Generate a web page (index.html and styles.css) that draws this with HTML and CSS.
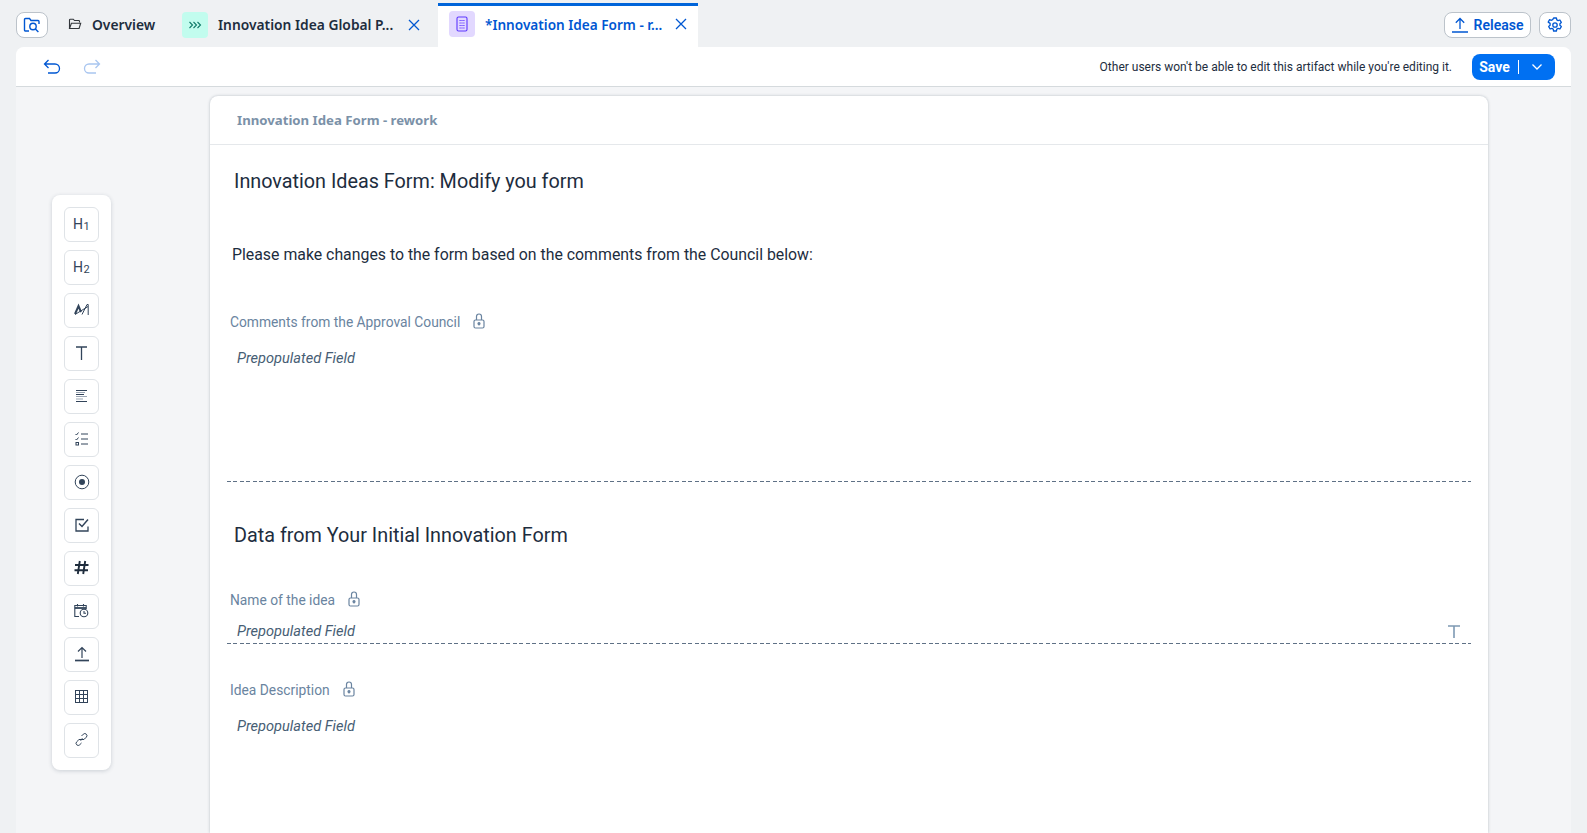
FILE: index.html
```html
<!DOCTYPE html>
<html lang="en">
<head>
    <meta charset="UTF-8">
    <meta name="viewport" content="width=device-width, initial-scale=1.0">
    <title>Innovation Idea Form - rework</title>
    <link rel="stylesheet" href="styles.css">
</head>
<body>
    <!-- Tab bar -->
    <header class="tabbar">
        <button class="ghost-btn search-btn" aria-label="Search">
            <svg width="18" height="18" viewBox="0 0 18 18" fill="none" stroke="#0057d2" stroke-width="1.4"><path d="M6 15H2.500a1 1 0 0 1-1-1V3.500a1 1 0 0 1 1-1h4l1.500 2h7a1 1 0 0 1 1 1V8"/><circle cx="10" cy="10.500" r="3.200"/><path d="M12.400 12.900l3 3"/></svg>
        </button>
        <div class="tab tab-overview">
            <svg width="14" height="14" viewBox="0 0 14 14" fill="none" stroke="#32363a" stroke-width="1.1"><path d="M1.500 11.500V3a.8.8 0 0 1 .8-.8h3l1.200 1.300h4.200a.8.8 0 0 1 .8.8v1.200"/><path d="M1.500 11.500h9.600l1.600-5.300H3.400z"/></svg>
            <span>Overview</span>
        </div>
        <div class="tab tab-process">
            <span class="chip chip-teal">
                <svg width="14" height="10" viewBox="0 0 14 10" fill="none" stroke="#0f7a6a" stroke-width="1.1"><path d="M1.500 2l3 3-3 3M5.500 2l3 3-3 3M9.500 2l3 3-3 3"/></svg>
            </span>
            <span class="tab-label">Innovation Idea Global P...</span>
            <svg class="tab-close" width="12" height="12" viewBox="0 0 12 12" stroke="#0057d2" stroke-width="1.3"><path d="M1 1l10 10M11 1L1 11"/></svg>
        </div>
        <div class="tab tab-active">
            <span class="chip chip-purple">
                <svg width="12" height="16" viewBox="0 0 12 16" fill="none" stroke="#5d36ff" stroke-width="1.1"><rect x="1" y="1" width="10" height="14" rx="1.500"/><path d="M3.500 4.500h5M3.500 7h5M3.500 9.500h5M3.500 12h5" stroke-dasharray="1.200 .7"/></svg>
            </span>
            <span class="tab-label">*Innovation Idea Form - r...</span>
            <svg class="tab-close" width="12" height="12" viewBox="0 0 12 12" stroke="#0057d2" stroke-width="1.3"><path d="M1 1l10 10M11 1L1 11"/></svg>
        </div>
        <div class="tabbar-actions">
            <button class="ghost-btn release-btn">
                <svg width="16" height="16" viewBox="0 0 16 16" fill="none" stroke="#0057d2" stroke-width="1.3"><path d="M8 12V1.500M3.800 5.700L8 1.500l4.200 4.200M0 15h16"/></svg>
                Release
            </button>
            <button class="ghost-btn gear-btn" aria-label="Settings">
                <svg width="16" height="16" viewBox="0 0 16 16" fill="none" stroke="#0057d2" stroke-width="1.3"><path d="M6.600 1h2.800l.4 1.900 1.300.7 1.800-.6 1.400 2.400-1.400 1.300v1.600l1.400 1.300-1.400 2.400-1.800-.6-1.300.7-.4 1.900H6.600l-.4-1.900-1.300-.7-1.800.6-1.400-2.400 1.400-1.300V6.400L1.200 5.100l1.400-2.400 1.800.6 1.300-.7z" stroke-linejoin="round"/><circle cx="8" cy="8" r="2.200"/></svg>
            </button>
        </div>
    </header>

    <main class="panel">
        <div class="toolbar">
            <svg class="undo" width="18" height="16" viewBox="0 0 18 16" fill="none" stroke="#0057d2" stroke-width="1.3"><path d="M5.500 1L1.500 5l4 4M1.500 5H12a4.500 4.500 0 0 1 0 9H5"/></svg>
            <svg class="redo" width="18" height="16" viewBox="0 0 18 16" fill="none" stroke="#a9c6f0" stroke-width="1.3"><path d="M12.500 1l4 4-4 4M16.500 5H6a4.500 4.500 0 0 0 0 9h7"/></svg>
            <span class="lock-note">Other users won't be able to edit this artifact while you're editing it.</span>
            <div class="save-btn">
                <span class="save-label">Save</span>
                <span class="save-caret">
                    <svg width="12" height="8" viewBox="0 0 12 8" fill="none" stroke="#fff" stroke-width="1.3"><path d="M1.500 1.500L6 6l4.500-4.500"/></svg>
                </span>
            </div>
        </div>

        <div class="workspace">
            <!-- Field palette -->
            <aside class="palette">
                <div class="tool"><span class="tool-h">H<sub>1</sub></span></div>
                <div class="tool"><span class="tool-h">H<sub>2</sub></span></div>
                <div class="tool">
                    <svg width="16" height="14" viewBox="0 0 16 14" fill="none" stroke="#32445a" stroke-width="1"><path d="M1 11L4.500 3 7 9" stroke-width="2"/><path d="M1 11.500L14 3.500"/><path d="M8 11.500L13 1.500h1.200v10.500"/></svg>
                </div>
                <div class="tool">
                    <svg width="11" height="14" viewBox="0 0 11 14" fill="none" stroke="#32445a" stroke-width="1.300"><path d="M0 1h11M5.500 1v13"/></svg>
                </div>
                <div class="tool">
                    <svg width="12" height="12" viewBox="0 0 12 12" fill="none" stroke-width="1"><path d="M0 .5h11M0 4.500h8M0 11.500h11" stroke="#32445a"/><path d="M0 2.500h9M0 6.500h11M0 9h7" stroke="#9aa5b3"/></svg>
                </div>
                <div class="tool">
                    <svg width="14" height="14" viewBox="0 0 14 14" fill="none" stroke="#32445a" stroke-width="1"><path d="M.5 2l1 1 2-2.500M.5 7l1 1 2-2.500"/><rect x="1" y="10.500" width="2.500" height="2.500"/><path d="M6 2h7M6 7h7M6 12h7"/></svg>
                </div>
                <div class="tool">
                    <svg width="16" height="16" viewBox="0 0 16 16"><circle cx="8" cy="8" r="6.800" fill="none" stroke="#32445a" stroke-width="1"/><circle cx="8" cy="8" r="3" fill="#32445a"/></svg>
                </div>
                <div class="tool">
                    <svg width="14" height="14" viewBox="0 0 14 14" fill="none" stroke="#32445a" stroke-width="1.300"><path d="M9 1.500H1v11.500h12V8.500"/><path d="M4 5.500l3 3 6-7" stroke-width="1.500"/></svg>
                </div>
                <div class="tool">
                    <svg width="15" height="15" viewBox="0 0 15 15" fill="none" stroke="#1f2d3d" stroke-width="1.900"><path d="M5.800 1L3.800 14M11.200 1l-2 13M1 5h13.500M.5 10.200H14"/></svg>
                </div>
                <div class="tool">
                    <svg width="15" height="15" viewBox="0 0 15 15" fill="none" stroke="#32445a" stroke-width="1.100"><path d="M5 13.500H.8V2.500h11.400v3.500"/><path d="M.8 5h11.400" stroke-width="1.800"/><path d="M3.500 1v2.500M9.500 1v2.500"/><circle cx="10" cy="10" r="3.800"/><path d="M10 8v2.200h2"/></svg>
                </div>
                <div class="tool">
                    <svg width="16" height="16" viewBox="0 0 16 16" fill="none" stroke="#32445a" stroke-width="1.200"><path d="M8 12V1.500M4 5.500l4-4 4 4"/><path d="M1 14.500h14" stroke-width="1.700"/></svg>
                </div>
                <div class="tool">
                    <svg width="13" height="13" viewBox="0 0 13 13" fill="none" stroke="#32445a" stroke-width="1"><rect x=".5" y=".5" width="12" height="12"/><path d="M4.500 .5v12M8.500 .5v12M.5 4.500h12M.5 8.500h12"/></svg>
                </div>
                <div class="tool">
                    <svg width="13" height="13" viewBox="0 0 13 13" fill="none" stroke="#32445a" stroke-width="1"><path d="M5.500 7.500l2-2M6.500 3l1.800-1.800a2.100 2.100 0 0 1 3 3L9.500 6a2.100 2.100 0 0 1-3 0M6.500 10l-1.800 1.800a2.100 2.100 0 0 1-3-3L3.500 7a2.100 2.100 0 0 1 3 0"/></svg>
                </div>
            </aside>

            <!-- Form canvas -->
            <section class="card">
                <div class="card-head">Innovation Idea Form - rework</div>
                <div class="card-body">
                    <h2 class="form-title">Innovation Ideas Form: Modify you form</h2>
                    <p class="form-text">Please make changes to the form based on the comments from the Council below:</p>

                    <div class="field field-comments">
                        <label class="field-label">Comments from the Approval Council
                            <svg class="lock" width="12" height="16" viewBox="0 0 12 16" fill="none" stroke="#6a84a0" stroke-width="1.200"><path d="M3.500 7V3.500a2.500 2.500 0 0 1 5 0V7"/><rect x="1" y="7" width="10" height="8" rx="1.500"/><circle cx="6" cy="10.500" r="1" fill="#6a84a0"/><path d="M6 11v1.500"/></svg>
                        </label>
                        <div class="field-value">Prepopulated Field</div>
                    </div>

                    <h2 class="form-title section-title">Data from Your Initial Innovation Form</h2>

                    <div class="field field-name">
                        <label class="field-label">Name of the idea
                            <svg class="lock" width="12" height="16" viewBox="0 0 12 16" fill="none" stroke="#6a84a0" stroke-width="1.200"><path d="M3.500 7V3.500a2.500 2.500 0 0 1 5 0V7"/><rect x="1" y="7" width="10" height="8" rx="1.500"/><circle cx="6" cy="10.500" r="1" fill="#6a84a0"/><path d="M6 11v1.500"/></svg>
                        </label>
                        <div class="field-value value-row">
                            <span>Prepopulated Field</span>
                            <svg width="12" height="13" viewBox="0 0 12 13" fill="none" stroke="#7d99b3" stroke-width="1.600"><path d="M0 1h12M6 1v12"/></svg>
                        </div>
                    </div>

                    <div class="field field-desc">
                        <label class="field-label">Idea Description
                            <svg class="lock" width="12" height="16" viewBox="0 0 12 16" fill="none" stroke="#6a84a0" stroke-width="1.200"><path d="M3.500 7V3.500a2.500 2.500 0 0 1 5 0V7"/><rect x="1" y="7" width="10" height="8" rx="1.500"/><circle cx="6" cy="10.500" r="1" fill="#6a84a0"/><path d="M6 11v1.500"/></svg>
                        </label>
                        <div class="field-value">Prepopulated Field</div>
                    </div>
                </div>
            </section>
        </div>
    </main>
</body>
</html>
```

FILE: styles.css
```css
* {
    box-sizing: border-box;
}

html, body {
    height: 100%;
}

body {
    margin: 0;
    height: 833px;
    overflow: hidden;
    background-color: #eff1f3;
    color: #1d2d3e;
    font-family: Roboto, "Noto Sans", "Liberation Sans", sans-serif;
    font-size: 14px;
    display: flex;
    flex-direction: column;
}

button {
    font-family: inherit;
}

/* Tab bar */
.tabbar {
    height: 47px;
    flex: none;
    padding: 3px 16px 0;
    display: flex;
    align-items: stretch;
}

.ghost-btn {
    background-color: #fff;
    border: 1px solid #bcc3ca;
    border-radius: 8px;
    color: #0057d2;
    height: 26px;
    padding: 0;
    margin-top: 9px;
    display: flex;
    align-items: center;
    justify-content: center;
}

.search-btn {
    width: 32px;
}

.tab {
    display: flex;
    align-items: center;
    font-family: "Noto Sans", Roboto, sans-serif;
    font-weight: 600;
    font-size: 13.8px;
    white-space: nowrap;
}

.tab-overview {
    margin-left: 20px;
    width: 113px;
    gap: 10px;
    padding-bottom: 2px;
}

.tab-process {
    width: 257px;
    padding-left: 1px;
    padding-bottom: 1px;
}

.tab-active {
    width: 260px;
    padding: 0 10px 5px 11px;
    background-color: #fff;
    border-top: 3px solid #0064d9;
    color: #0057d2;
}

.tab-active .tab-label {
    width: 190px;
    font-size: 13.6px;
}

.chip {
    width: 26px;
    height: 26px;
    border-radius: 4px;
    flex: none;
    display: flex;
    align-items: center;
    justify-content: center;
}

.chip-teal {
    background-color: #c2fcee;
}

.chip-purple {
    background-color: #e2d8ff;
}

.tab-label {
    margin-left: 10px;
    width: 190px;
    overflow: hidden;
}

.tab-close {
    flex: none;
}

.tabbar-actions {
    margin-left: auto;
    display: flex;
    gap: 8px;
}

.release-btn {
    width: 87px;
    gap: 6px;
    font-weight: 600;
    font-size: 14px;
}

.gear-btn {
    width: 32px;
}

/* Main panel */
.panel {
    flex: 1;
    min-height: 0;
    margin: 0 16px;
    background-color: #f4f5f7;
    border-radius: 8px 8px 0 0;
    display: flex;
    flex-direction: column;
}

.toolbar {
    height: 40px;
    flex: none;
    background-color: #fff;
    border-bottom: 1px solid #d5dadd;
    border-radius: 8px 8px 0 0;
    padding: 0 16px 0 27px;
    display: flex;
    align-items: center;
}

.redo {
    margin-left: 22px;
}

.lock-note {
    margin-left: auto;
    font-size: 12px;
}

.save-btn {
    margin-left: 20px;
    width: 83px;
    height: 26px;
    background-color: #0070f2;
    border-radius: 8px;
    color: #fff;
    font-weight: 700;
    font-size: 14px;
    display: flex;
    align-items: center;
}

.save-label {
    width: 47px;
    text-align: center;
    line-height: 14px;
    border-right: 1px solid #fff;
    padding-right: 1px;
}

.save-caret {
    flex: 1;
    display: flex;
    justify-content: center;
}

.workspace {
    flex: 1;
    min-height: 0;
    position: relative;
    padding: 9px 83px 0 194px;
}

/* Palette floats over the workspace */
.palette {
    position: absolute;
    left: 36px;
    top: 108px;
    width: 59px;
    background-color: #fff;
    border-radius: 8px;
    box-shadow: 0 1px 4px rgba(40, 60, 80, .2);
    padding: 12px;
    display: flex;
    flex-direction: column;
    gap: 8px;
}

.tool {
    width: 35px;
    height: 35px;
    border: 1px solid #dfe3e7;
    border-radius: 6px;
    padding-bottom: 2px;
    display: flex;
    align-items: center;
    justify-content: center;
}

.tool-h {
    font-size: 14px;
    color: #32445a;
    letter-spacing: .5px;
}

.tool-h sub {
    font-size: 11px;
    vertical-align: -1px;
    line-height: 0;
}

/* Form card */
.card {
    height: 100%;
    background-color: #fff;
    border-radius: 8px 8px 0 0;
    box-shadow: 0 0 3px rgba(40, 60, 80, .3);
}

.card-head {
    height: 49px;
    padding: 15px 27px 0;
    border-bottom: 1px solid #e5e8eb;
    color: #7b91a8;
    font-family: "Noto Sans", Roboto, sans-serif;
    font-weight: 700;
    font-size: 13.2px;
}

.card-body {
    padding: 0 17px;
}

.form-title {
    margin: 0;
    font-weight: 400;
    font-size: 19.8px;
    line-height: 28px;
    padding: 23px 7px 0;
}

.form-text {
    margin: 0;
    padding: 47px 5px 0;
    font-size: 15.85px;
    line-height: 24px;
}

.field-label {
    display: flex;
    align-items: center;
    gap: 13px;
    padding-left: 3px;
    color: #6a84a0;
    font-size: 13.8px;
    line-height: 20px;
}

.lock {
    margin-top: -2px;
}

.field-value {
    padding-left: 10px;
    font-style: italic;
    font-size: 14.6px;
    line-height: 20px;
    color: #475e75;
}

.field-comments {
    margin-top: 45px;
    height: 170px;
    background: repeating-linear-gradient(90deg, #5f7186 0 4px, transparent 4px 6.5px) bottom / 100% 1px no-repeat;
}

.field-comments .field-value {
    margin-top: 16px;
}

.section-title {
    padding-top: 40px;
}

.field-name {
    margin-top: 40px;
    background: repeating-linear-gradient(90deg, #5f7186 0 4px, transparent 4px 6.5px) bottom / 100% 1px no-repeat;
}

.value-row {
    margin-top: 10px;
    height: 24px;
    padding-right: 11px;
    padding-bottom: 2px;
    display: flex;
    justify-content: space-between;
    align-items: center;
}

.field-desc {
    margin-top: 36px;
}

.field-desc .field-value {
    margin-top: 16px;
}
```
